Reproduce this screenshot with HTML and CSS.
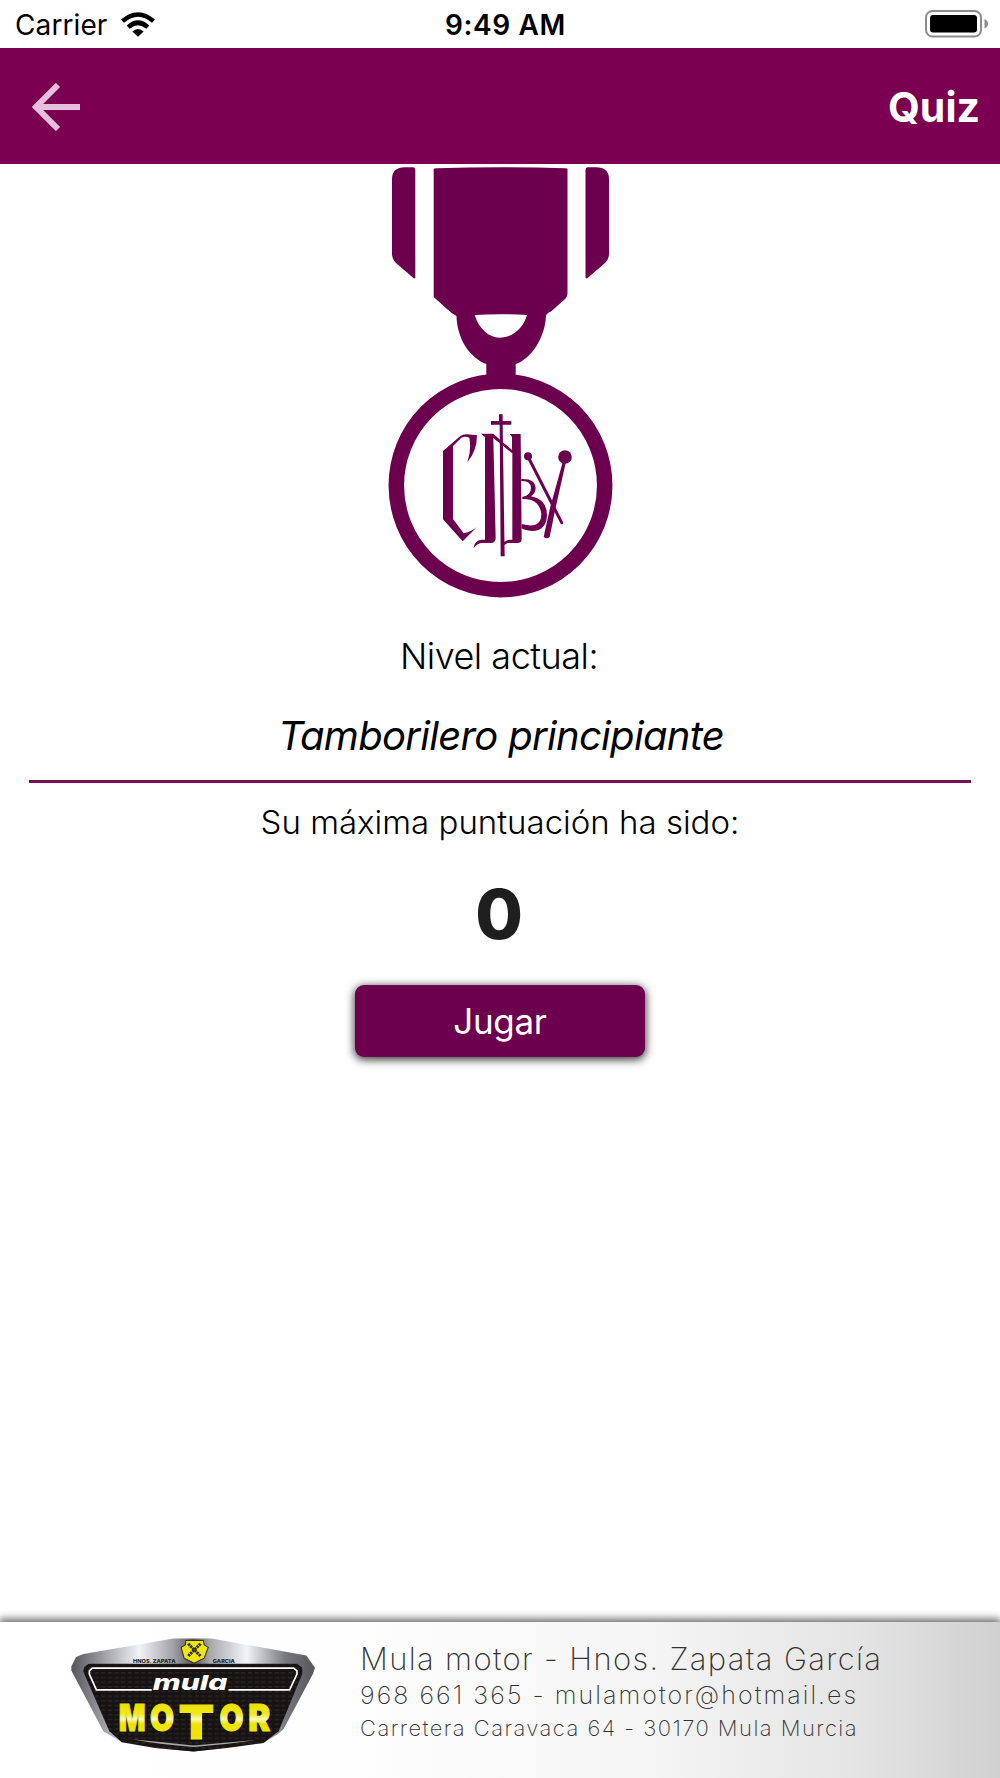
FILE: index.html
```html
<!DOCTYPE html>
<html lang="es">
<head>
    <meta charset="UTF-8">
    <meta name="viewport" content="width=device-width, initial-scale=1.0">
    <title>Quiz</title>
    <link rel="stylesheet" href="styles.css">
</head>
<body>

    <div class="status-bar">
        <div class="carrier">
            <span class="carrier-name">Carrier</span>
            <svg class="wifi" viewBox="0 0 102 74">
                <path d="M0 22 Q51 -22 102 22 L93 32 Q51 -4 9 32Z"/>
                <path d="M17 40 Q51 9 85 40 L76 50 Q51 28 26 50Z"/>
                <path d="M34 58 Q51 43 68 58 L51 74Z"/>
            </svg>
        </div>
        <span class="clock">9:49 AM</span>
        <svg class="battery" viewBox="0 0 64 28">
            <rect x="1" y="1" width="55" height="25.5" rx="6.5" fill="none" stroke="#8c8c8c" stroke-width="2"/>
            <rect x="5" y="5" width="47" height="17.5" rx="3"/>
            <path d="M59.5 9 Q63 10.5 63 13.7 Q63 17 59.5 18.5Z" fill="#8c8c8c"/>
        </svg>
    </div>

    <header class="toolbar">
        <svg class="back" viewBox="0 0 48 48">
            <path d="M48 24H6M26 2L4 24L26 46"/>
        </svg>
        <h1 class="title">Quiz</h1>
    </header>

    <main class="content">
        <svg class="medal" viewBox="0 9 240 435">
            <!-- ribbon -->
            <path d="M12 24Q12 12.500 25 12.300H33Q35.300 12.300 35.300 15V123L34 123.500L16 108Q12 104 12 99Z"/>
            <path d="M229 24Q229 12.500 216 12.300H207.500Q205.500 12.300 205.500 15V123L207 123.500L225 108Q229 104 229 99Z"/>
            <path fill-rule="evenodd" d="M53.700 14Q53.700 13.300 57 13.200Q120 11.300 185 13.200Q187.500 13.300 187.500 14V138Q187.500 142 184 145L171 156.500Q166 158.500 166 161C165 183 151 204 135.700 209V232H106.300V209C90 203 77 184 76.500 161Q71 158 67 154L53.700 142ZM94.700 160C99 174 109 182.700 119.500 182.700C132 182.700 143 174 147 160Q120 158.500 94.700 160Z"/>
            <circle class="ring" cx="120.500" cy="330.500" r="104.200"/>
            <!-- brotherhood monogram -->
            <g transform="translate(50 250) scale(.33333)">
                <path d="M39 138L92 92Q102 86 112 88L141 91Q141 138 112 172Q125 135 118 98Q105 92 94 98L69 123V342L101 385Q126 379 141 366L98 409L39 343Z"/>
                <path d="M153 86H190L215 109L246 135V96L239 87H272L275 400Q276 414 263 414H233L216 424V418Q226 405 239 404H247V145L190 99L197 400Q196 414 183 414H157Q143 414 131 429Q134 405 155 404H165V96Z"/>
                <path d="M207 28H218V48H244V59H218L224 454H212L209 59H183V48H207Z"/>
                <path d="M274 222Q315 220 317 249Q316 266 303 274Q350 282 351 330Q349 378 306 378Q284 377 275 370V357Q334 373 334 327Q328 280 277 282V276Q303 270 303 248Q301 226 274 228Z"/>
                <path class="stick-thin" d="M296 159L395 353"/>
                <path d="M398 172L407 174L376 312L359 396Q350 404 341 395L361 305Z"/>
                <circle cx="294" cy="154" r="12"/>
                <circle cx="405" cy="156" r="20.500"/>
            </g>
        </svg>

        <p class="label">Nivel actual:</p>
        <p class="level">Tamborilero principiante</p>
        <hr class="divider">
        <p class="score-label">Su máxima puntuación ha sido:</p>
        <p class="score">0</p>
        <button class="play">Jugar</button>
    </main>

    <footer class="banner">
        <svg class="sponsor-logo" viewBox="30 80 740 350">
            <defs>
                <linearGradient id="chrome">
                    <stop offset="0" stop-color="#55555b"/>
                    <stop offset=".1" stop-color="#8c8c92"/>
                    <stop offset=".28" stop-color="#f2f4f7"/>
                    <stop offset=".42" stop-color="#a0a0a6"/>
                    <stop offset=".5" stop-color="#55555a"/>
                    <stop offset=".57" stop-color="#a9a9ae"/>
                    <stop offset=".72" stop-color="#f2f4f7"/>
                    <stop offset=".88" stop-color="#77777e"/>
                    <stop offset="1" stop-color="#55555b"/>
                </linearGradient>
                <linearGradient id="gold" gradientUnits="userSpaceOnUse" x1="0" y1="278" x2="0" y2="385">
                    <stop offset="0" stop-color="#e9df00"/>
                    <stop offset=".3" stop-color="#f3e91b"/>
                    <stop offset=".45" stop-color="#fdf9b8"/>
                    <stop offset=".58" stop-color="#eee308"/>
                    <stop offset="1" stop-color="#f1e600"/>
                </linearGradient>
                <pattern id="mesh" width="20" height="14" patternUnits="userSpaceOnUse">
                    <rect width="20" height="14" fill="#171313"/>
                    <rect x="3" y="3" width="13" height="4" fill="#2a2526"/>
                </pattern>
            </defs>
            <path d="M48 140L70 131L340 84H455L738 135L764 172L758 190L670 355L652 371L610 397L500 412L400 423L285 412L185 395L130 362L34 180V168Z" fill="url(#chrome)"/>
            <path d="M86 160H710L726 172V190L655 362L610 397L500 412L400 423L285 412L185 395L148 362L70 184L72 170Z" fill="url(#mesh)"/>
            <path d="M275 238H109L88 191V181L97 173H700L710 181V191L688 238H505" fill="none" stroke="#fff" stroke-width="5"/>
            <path d="M215 386Q310 395 400 405Q500 396 590 388Q500 402 400 409Q300 402 215 386Z" fill="#aaa"/>
            <path d="M377 90H429L432 103L444 111L432 143L402 158L372 143L363 111L376 103Z" fill="#eee516" stroke="#332f18" stroke-width="3"/>
            <path d="M384 100L421 137M421 100L384 137" stroke="#332f18" stroke-width="9" stroke-dasharray="7 2"/>
            <text class="owner" x="219" y="157" textLength="127" lengthAdjust="spacingAndGlyphs">HNOS. ZAPATA</text>
            <text class="owner" x="458" y="157" textLength="66" lengthAdjust="spacingAndGlyphs">GARCIA</text>
            <text class="brand-script" x="278" y="239" textLength="224" lengthAdjust="spacingAndGlyphs">mula</text>
            <g class="brand-block">
                <text x="176" y="361" textLength="80" lengthAdjust="spacingAndGlyphs">M</text>
                <text x="270" y="361" textLength="72" lengthAdjust="spacingAndGlyphs">O</text>
                <text class="tall" x="356" y="384" textLength="106" lengthAdjust="spacingAndGlyphs">T</text>
                <text x="478" y="361" textLength="72" lengthAdjust="spacingAndGlyphs">O</text>
                <text x="564" y="361" textLength="66" lengthAdjust="spacingAndGlyphs">R</text>
            </g>
        </svg>
        <div class="sponsor-info">
            <p class="sponsor-name">Mula motor - Hnos. Zapata García</p>
            <p class="sponsor-contact">968 661 365 - mulamotor@hotmail.es</p>
            <p class="sponsor-address">Carretera Caravaca 64 - 30170 Mula Murcia</p>
        </div>
    </footer>

</body>
</html>
```
FILE: styles.css
```css
* {
    box-sizing: border-box;
}
body {
    margin: 0;
    min-height: 1778px;
    display: flex;
    flex-direction: column;
    font-family: Inter, "Liberation Sans", sans-serif;
    background-color: #fff;
    color: #000;
}
p, h1 {
    margin: 0;
    white-space: nowrap;
}
svg {
    display: block;
    flex-shrink: 0;
}

/* Status bar */
.status-bar {
    height: 48px;
    padding: 2px 11px 0 15px;
    display: grid;
    grid-template-columns: 1fr auto 1fr;
    align-items: center;
    font-size: 28px;
}
.carrier {
    display: flex;
    align-items: center;
    gap: 14px;
    letter-spacing: 0.1px;
}
.wifi {
    width: 34px;
    height: 25px;
    margin-bottom: 2px;
}
.clock {
    font-weight: 600;
    letter-spacing: 0.6px;
    padding-left: 7px;
}
.battery {
    width: 64px;
    height: 28px;
    justify-self: end;
    margin-bottom: 2px;
}

/* Toolbar */
.toolbar {
    height: 116px;
    padding: 0 20px 0 32px;
    display: flex;
    align-items: center;
    justify-content: space-between;
    background-color: #7b0051;
}
.back {
    width: 48px;
    height: 48px;
    margin-top: 1px;
    fill: none;
    stroke: #e5bfdb;
    stroke-width: 6;
}
.title {
    margin-top: 2px;
    color: #fff;
    font-size: 41px;
    font-weight: 700;
}

/* Content */
.content {
    flex: 1;
    display: flex;
    flex-direction: column;
    align-items: center;
}
.medal {
    width: 240px;
    height: 435px;
    fill: #6c004f;
}
.ring {
    fill: none;
    stroke: #6c004f;
    stroke-width: 15.5px;
}
.stick-thin {
    stroke: #6c004f;
    stroke-width: 9px;
    stroke-linecap: round;
}
.label {
    margin-top: 35px;
    padding-right: 2px;
    font-size: 36px;
    font-weight: 300;
    line-height: 44px;
    letter-spacing: -0.5px;
}
.level {
    margin-top: 34px;
    padding-left: 2px;
    font-size: 40px;
    font-style: italic;
    line-height: 48px;
    letter-spacing: -0.7px;
}
.divider {
    width: 942px;
    height: 3px;
    margin: 20px 0 18px;
    border: none;
    background-color: #74105a;
}
.score-label {
    font-size: 33px;
    font-weight: 300;
    line-height: 42px;
}
.score {
    margin-top: 29px;
    padding-right: 2px;
    color: #1e1e1e;
    font-size: 69px;
    font-weight: 800;
    line-height: 84px;
}
.play {
    width: 290px;
    height: 72px;
    margin-top: 29px;
    padding: 0;
    border: none;
    border-radius: 9px;
    background-color: #6c004f;
    box-shadow: 0 2px 8px 1px rgba(0, 0, 0, 0.75);
    color: #fff;
    font-family: inherit;
    font-size: 35px;
    letter-spacing: -0.3px;
}

/* Sponsor banner */
.banner {
    height: 156px;
    padding: 15px 0 0 70px;
    display: flex;
    align-items: flex-start;
    gap: 43px;
    background: linear-gradient(90deg, #fff 0%, #fefefe 35%, #f5f5f5 65%, #e5e5e5 85%, #d0d0d0 100%);
    box-shadow: 0 -2px 8px 1px rgba(0, 0, 0, 0.6);
}
.sponsor-logo {
    width: 247px;
    height: 117px;
}
.sponsor-info {
    padding-top: 3px;
    color: #333;
    font-weight: 200;
}
.sponsor-name {
    font-size: 31px;
    line-height: 38px;
    letter-spacing: 1.35px;
}
.sponsor-contact {
    font-size: 25px;
    line-height: 34px;
    letter-spacing: 2.05px;
}
.sponsor-address {
    font-size: 22px;
    line-height: 32px;
    letter-spacing: 1.45px;
}
.owner {
    font-size: 14px;
    font-weight: 800;
    fill: #222;
}
.brand-script {
    font-size: 62px;
    font-weight: 800;
    font-style: italic;
    fill: #fff;
}
.brand-block {
    font-size: 112px;
    font-weight: 900;
    fill: url(#gold);
    stroke: url(#gold);
    stroke-width: 3px;
}
.tall {
    font-size: 142px;
}
```
